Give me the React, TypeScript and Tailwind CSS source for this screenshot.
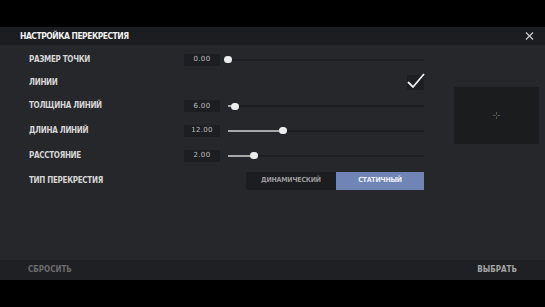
import React from "react";

const font = { fontFamily: '"DejaVu Sans Condensed", "Liberation Sans Narrow", "Liberation Sans", sans-serif' };
const numFont = { fontFamily: '"DejaVu Sans", "Liberation Sans", sans-serif' };

type SliderRow = { label: string; value: string; pct: number; h: string };

function Slider({ pct }: { pct: number }) {
  return (
    <div className="relative w-[196px] h-[10px] flex items-center">
      <div className="w-full h-[2px] bg-[#1c1d20]" />
      <div className="absolute left-0 h-[2px] bg-[#a8a8a8]" style={{ width: `${pct}%` }} />
      <div
        className="absolute w-[8px] h-[7px] rounded-full bg-[#ececec] -translate-x-1/2"
        style={{ left: `${pct}%` }}
      />
    </div>
  );
}

function ValueRow({ row }: { row: SliderRow }) {
  return (
    <div className={`flex items-center ${row.h}`}>
      <div className="w-[184px] pl-[29px] text-[8px] font-bold text-[#d6d6d6] tracking-[-0.3px]">
        {row.label}
      </div>
      <div
        className="w-[36px] h-[12px] bg-[#1d1e21] flex items-center justify-center text-[7px] text-[#bdbdbd] tracking-[0.3px]"
        style={numFont}
      >
        {row.value}
      </div>
      <div className="ml-[8px]">
        <Slider pct={row.pct} />
      </div>
    </div>
  );
}

export default function App() {
  const rows: SliderRow[] = [
    { label: "ТОЛЩИНА ЛИНИЙ", value: "6.00", pct: 3.5, h: "h-[24px]" },
    { label: "ДЛИНА ЛИНИЙ", value: "12.00", pct: 28, h: "h-[25px]" },
    { label: "РАССТОЯНИЕ", value: "2.00", pct: 13.5, h: "h-[25px]" },
  ];

  return (
    <div className="w-[545px] h-[307px] bg-black flex flex-col overflow-hidden" style={font}>
      <div className="h-[27px] shrink-0" />

      {/* Header */}
      <div className="h-[18px] shrink-0 bg-[#1c1d20] flex items-center justify-between pl-[20px] pr-[11px]">
        <span className="text-[8.5px] font-bold text-[#f0f0f0] tracking-[-0.5px]">НАСТРОЙКА ПЕРЕКРЕСТИЯ</span>
        <svg width="9" height="8" viewBox="0 0 9 8">
          <path d="M1 0.5 L8 7.5 M8 0.5 L1 7.5" stroke="#c8c8c8" strokeWidth="1.3" />
        </svg>
      </div>

      {/* Content */}
      <div className="flex-1 bg-[#26272b] flex">
        <div className="w-[424px] pt-[3px] flex flex-col">
          <ValueRow row={{ label: "РАЗМЕР ТОЧКИ", value: "0.00", pct: 0, h: "h-[23px]" }} />

          <div className="flex items-center h-[23px]">
            <div className="flex-1 pl-[29px] text-[8px] font-bold text-[#d6d6d6] tracking-[-0.3px]">ЛИНИИ</div>
            <div className="relative w-[17px] h-[15px] bg-[#1d1e21]">
              <svg className="absolute -left-[1px] -top-[3px]" width="20" height="18" viewBox="0 0 20 18">
                <path d="M2 10 L7 15 L18 2" stroke="#eeeeee" strokeWidth="1.8" fill="none" />
              </svg>
            </div>
          </div>

          {rows.map((r) => (
            <ValueRow key={r.label} row={r} />
          ))}

          <div className="flex items-center h-[25px]">
            <div className="flex-1 pl-[29px] text-[8px] font-bold text-[#d6d6d6] tracking-[-0.3px]">ТИП ПЕРЕКРЕСТИЯ</div>
            <div className="flex h-[18px]">
              <div className="w-[90px] bg-[#1c1d20] flex items-center justify-center text-[7px] font-bold text-[#9a9a9a] tracking-[-0.2px]">
                ДИНАМИЧЕСКИЙ
              </div>
              <div className="w-[88px] bg-[#7085b5] flex items-center justify-center text-[7px] font-bold text-[#eef1f8] tracking-[-0.2px]">
                СТАТИЧНЫЙ
              </div>
            </div>
          </div>
        </div>

        {/* Preview */}
        <div className="ml-[30px] mt-[42px] w-[85px] h-[57px] bg-[#1b1c1e] flex items-center justify-center">
          <svg width="7" height="7" viewBox="0 0 7 7">
            <path d="M3.5 0 V2.5 M3.5 4.5 V7 M0 3.5 H2.5 M4.5 3.5 H7" stroke="#5a5a48" strokeWidth="1" />
          </svg>
        </div>
      </div>

      {/* Footer */}
      <div className="h-[20px] shrink-0 bg-[#1f2023] flex items-center justify-between pl-[28px] pr-[28px]">
        <span className="text-[8px] font-bold text-[#6c6c6e]">СБРОСИТЬ</span>
        <span className="text-[8px] font-bold text-[#a4a4a6]">ВЫБРАТЬ</span>
      </div>

      <div className="h-[27px] shrink-0" />
    </div>
  );
}
